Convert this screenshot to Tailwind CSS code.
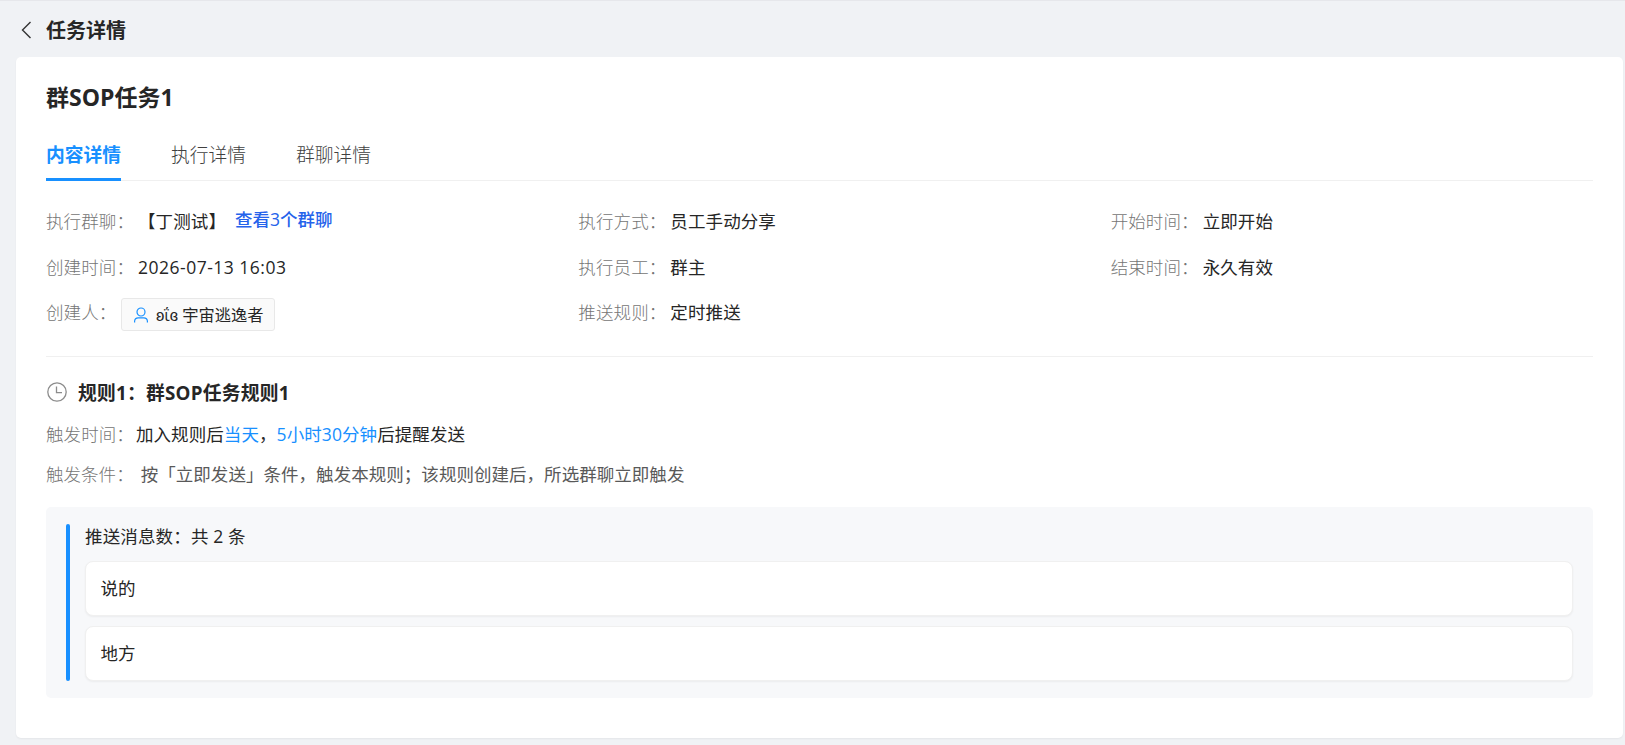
<!DOCTYPE html>
<html lang="zh-CN">
<head>
  <meta charset="UTF-8" />
  <meta name="viewport" content="width=device-width, initial-scale=1.0" />
  <title>任务详情</title>
  <script src="https://cdn.jsdelivr.net/npm/@tailwindcss/browser@4"></script>
</head>
<body class="bg-[#f0f2f5] text-[#262626] h-screen overflow-hidden border-t border-[#e6e7eb] font-['Open_Sans','Noto_Sans_CJK_SC',sans-serif]">
  <header class="flex items-center h-14 pl-[21px] pt-[2px]">
    <svg class="w-[11px] h-[18px] mr-[14px]" viewBox="0 0 11 18" fill="none" stroke="#333" stroke-width="1.4"><path d="M9.5 1 1.5 9l8 8" /></svg>
    <h1 class="text-[20px] font-bold leading-7 pt-[2px]">任务详情</h1>
  </header>

  <main class="bg-white rounded-[5px] shadow-xs ml-4 mr-[2px] h-[681px] px-[30px] pt-6">
    <h2 class="text-[23px] font-bold leading-8">群SOP任务1</h2>

    <nav class="flex gap-[50px] mt-4 h-[52px] border-b border-[#f0f0f0] text-[18.75px] leading-[52px] text-[#404040]">
      <a class="h-[52px] border-b-3 border-[#1890ff] text-[#1890ff] font-bold">内容详情</a>
      <a class="font-light">执行详情</a>
      <a class="font-light">群聊详情</a>
    </nav>

    <section class="grid grid-cols-3 gap-x-[50px] auto-rows-[45.6px] pt-[17px] h-[176px] border-b border-[#f0f0f0] text-[17.5px] leading-[46px] tracking-[0.1px] whitespace-nowrap">
      <div class="flex"><span class="font-light text-[#757575] mr-1">执行群聊：</span><span>【丁测试】</span><a class="ml-[9px] -mt-[2px] tracking-normal font-medium text-[#2563eb]">查看3个群聊</a></div>
      <div class="flex"><span class="font-light text-[#757575] mr-1">执行方式：</span><span>员工手动分享</span></div>
      <div class="flex"><span class="font-light text-[#757575] mr-1">开始时间：</span><span>立即开始</span></div>
      <div class="flex"><span class="font-light text-[#757575] mr-1">创建时间：</span><span class="tracking-[0.5px]">2026-07-13 16:03</span></div>
      <div class="flex"><span class="font-light text-[#757575] mr-1">执行员工：</span><span>群主</span></div>
      <div class="flex"><span class="font-light text-[#757575] mr-1">结束时间：</span><span>永久有效</span></div>
      <div class="flex">
        <span class="font-light text-[#757575] mr-[4.6px]">创建人：</span>
        <span class="flex items-center w-[154px] h-[33px] mt-[9px] px-[10px] border border-[#e8e8e8] rounded-[3px] bg-[#fafafa] text-[16.25px] leading-8 tracking-normal">
          <svg class="w-[16px] h-[16px] ml-[1px] mr-[7px] shrink-0" viewBox="0 0 16 16" fill="none" stroke="#1890ff" stroke-width="1.2"><circle cx="8" cy="5" r="4" /><path d="M1.6 15.6v-1.4a3.6 3.6 0 0 1 3.6-3.4h5.6a3.6 3.6 0 0 1 3.6 3.4v1.4" /></svg>
          <span class="pt-px">ʚΐɞ 宇宙逃逸者</span>
        </span>
      </div>
      <div class="flex"><span class="font-light text-[#757575] mr-1">推送规则：</span><span>定时推送</span></div>
    </section>

    <section class="pt-4">
      <h3 class="flex items-center h-10 text-[18.75px] font-bold tracking-[0.25px] pt-px">
        <svg class="w-[20px] h-[20px] ml-[1px] mr-[11px] -mt-[3px]" viewBox="0 0 20 20" fill="none" stroke="#8c8c8c" stroke-width="1.3"><circle cx="10" cy="10" r="9.2" /><path d="M9.5 4.5v6.2H15" /></svg>
        规则1：群SOP任务规则1
      </h3>
      <p class="flex h-10 text-[17.5px] leading-[42px] tracking-[0.08px]"><span class="font-light text-[#757575] mr-[2px]">触发时间：</span><span>加入规则后<span class="text-[#1890ff]">当天</span>，<span class="text-[#1890ff]">5小时30分钟</span>后提醒发送</span></p>
      <p class="flex h-10 text-[17.5px] leading-[42px] tracking-[0.04px] text-[#595959]"><span class="font-light text-[#757575] mr-[7px]">触发条件：</span><span>按「立即发送」条件，触发本规则；该规则创建后，所选群聊立即触发</span></p>

      <div class="mt-[14px] flex h-[191px] px-5 py-[17px] rounded-[5px] bg-[#f7f8fa] text-[17.5px]">
        <div class="w-1 rounded-[2px] bg-[#1890ff]"></div>
        <div class="flex-1 ml-[15px]">
          <p class="h-[37px] leading-[25px] tracking-[0.15px]">推送消息数：共 2 条</p>
          <div class="h-[55px] px-[14.5px] leading-[53px] bg-white border border-[#f0f0f0] rounded-[8px] shadow-xs">说的</div>
          <div class="h-[55px] mt-[10px] px-[14.5px] leading-[53px] bg-white border border-[#f0f0f0] rounded-[8px] shadow-xs">地方</div>
        </div>
      </div>
    </section>
  </main>
</body>
</html>
